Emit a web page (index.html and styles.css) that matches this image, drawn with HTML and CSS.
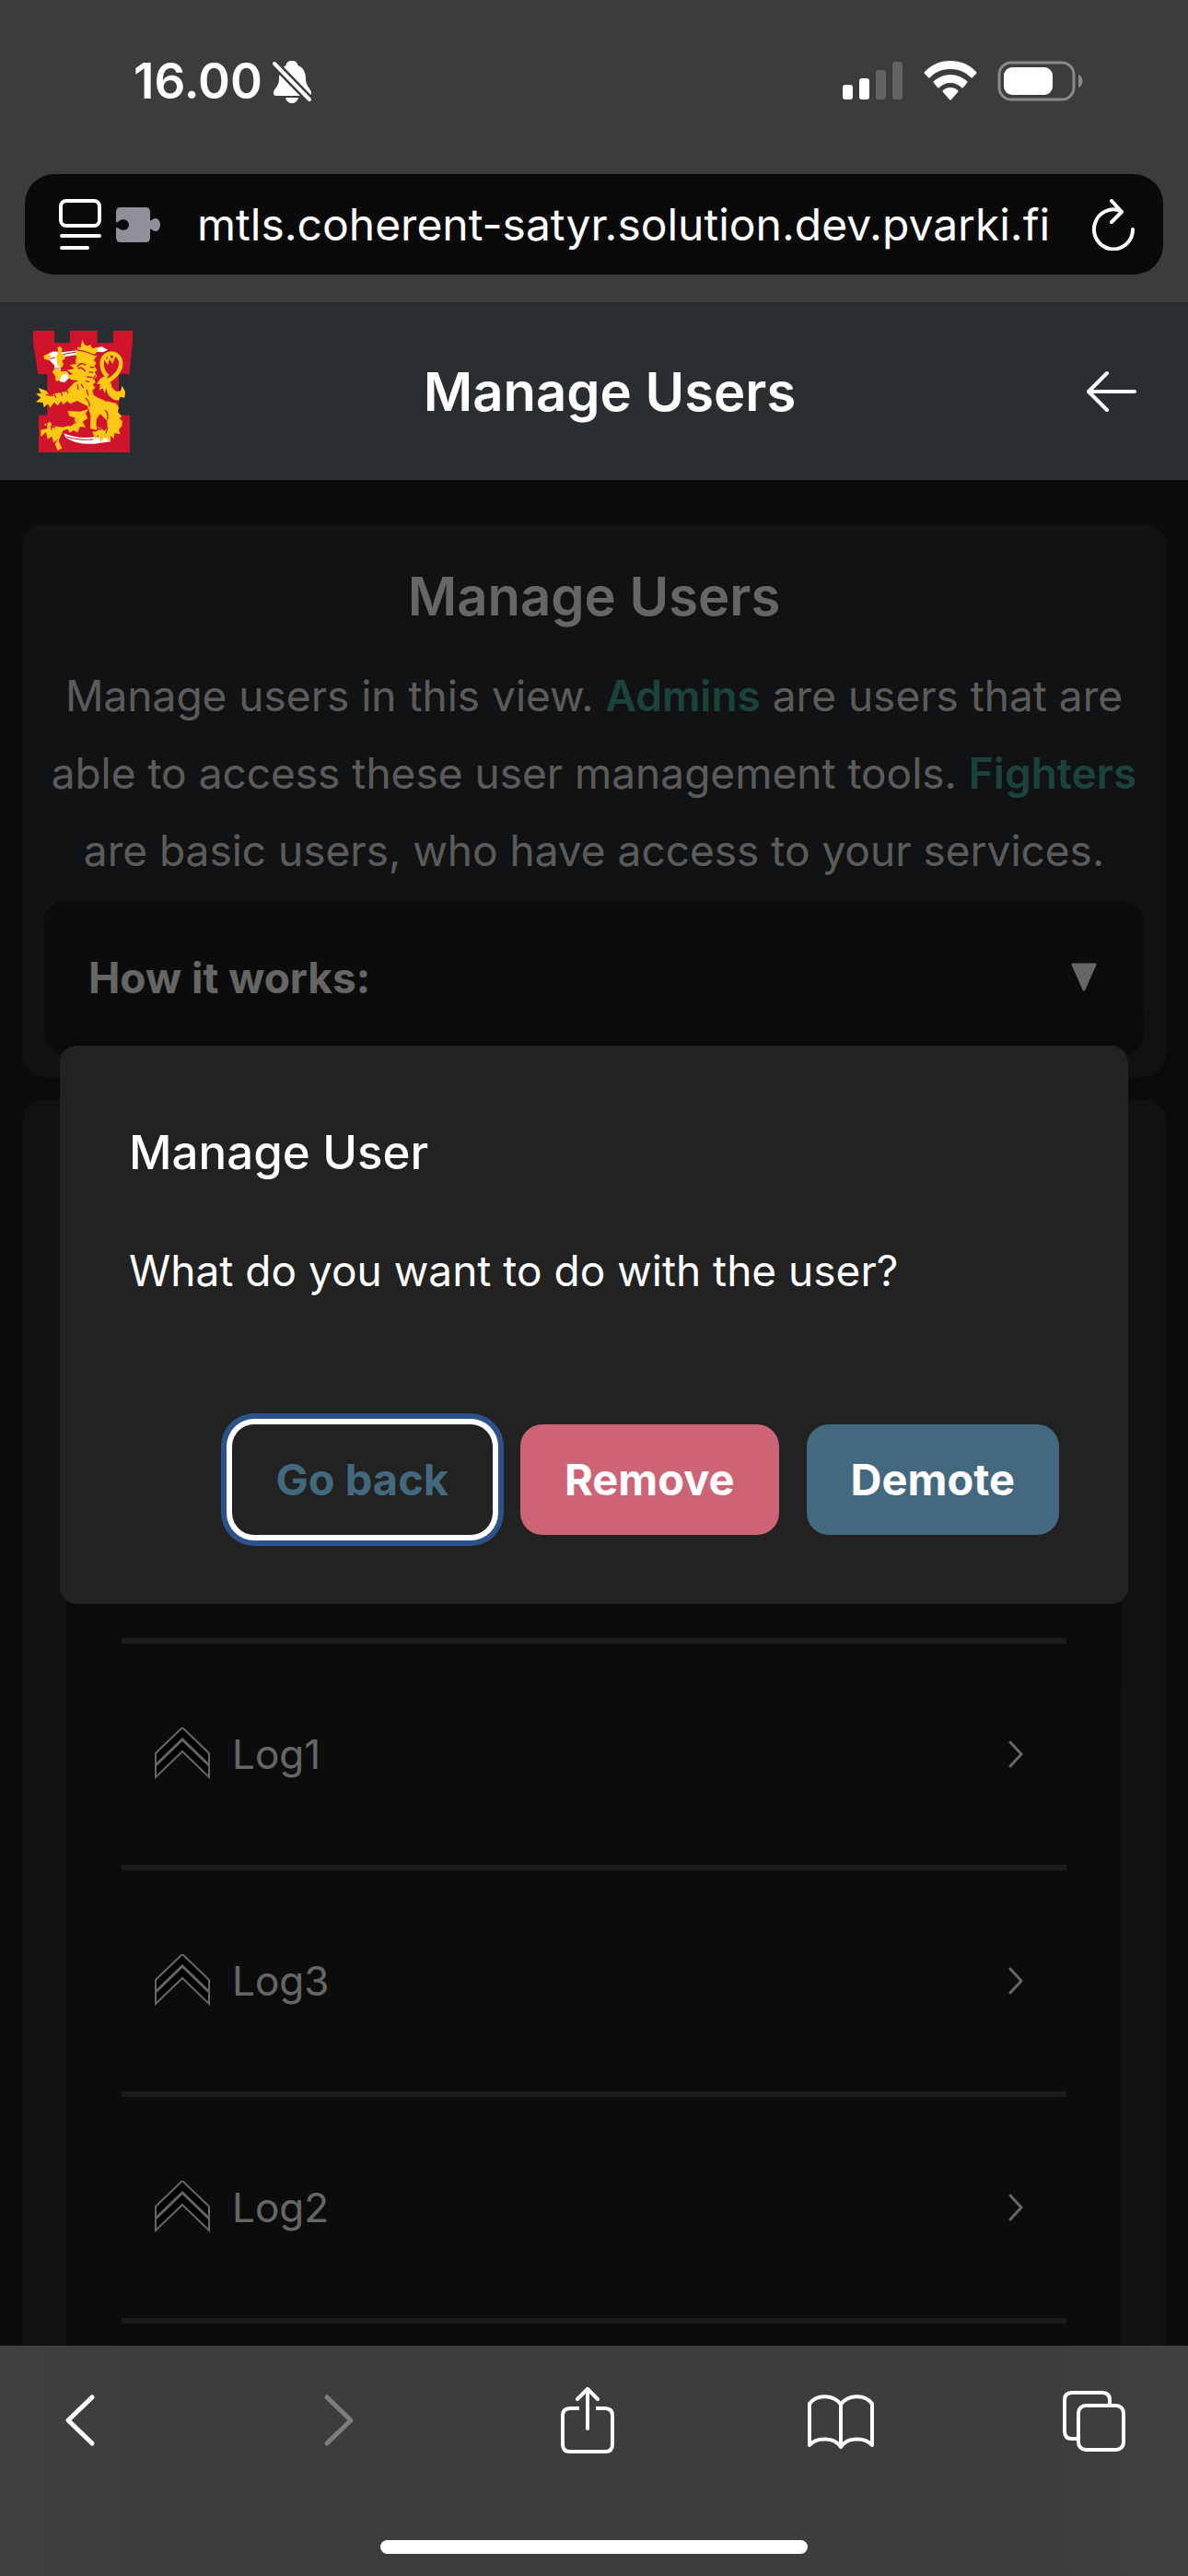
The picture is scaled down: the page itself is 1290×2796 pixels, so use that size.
FILE: index.html
```html
<!DOCTYPE html>
<html lang="en">
<head>
<meta charset="utf-8">
<meta name="viewport" content="width=device-width, initial-scale=1">
<title>Manage Users</title>
<link rel="stylesheet" href="styles.css">
</head>
<body>
<svg class="defs" width="0" height="0" aria-hidden="true">
  <symbol id="rank" viewBox="0 2 62 58">
    <path d="M2 56V30L31 2l29 28v26L31 28Z" fill="#000" stroke="#fff" stroke-width="2"/>
    <path d="M2 43 31 15l29 28" fill="none" stroke="#fff" stroke-width="3"/>
  </symbol>
  <symbol id="chevron" viewBox="0 0 16 30">
    <path d="M2 2 14 15 2 28" fill="none" stroke="#fff" stroke-width="3" stroke-linecap="round" stroke-linejoin="round"/>
  </symbol>
</svg>

<div class="top-bar">
  <div class="status">
    <div class="status-side">
      <time class="clock">16.00</time>
      <svg width="44" height="48" viewBox="0 0 44 48" aria-label="Silent">
        <path d="M22 2c-4 0-6 2-6.500 5C10 10 8 16 8 22c0 8-6 10-6 15 0 2 1 3 3 3h35c2 0 3-1 3-3 0-5-6-7-6-15 0-8-3-13-8.500-15C28 4 26 2 22 2Z" fill="#fff"/>
        <path d="M15 42h14c-1 4-4 6-7 6s-6-2-7-6Z" fill="#fff"/>
        <path d="M2 4 42 45" stroke="#3c3c3c" stroke-width="9"/>
        <path d="M3 5 41 44" stroke="#fff" stroke-width="4" stroke-linecap="round"/>
      </svg>
    </div>
    <div class="status-side">
      <svg width="66" height="44" viewBox="0 0 66 44" aria-label="Signal">
        <g fill="#fff"><rect y="26" width="11" height="16" rx="3"/><rect x="18" y="19" width="11" height="23" rx="3"/></g>
        <g fill="#636363"><rect x="36" y="10" width="11" height="32" rx="3"/><rect x="54" y="1" width="11" height="41" rx="3"/></g>
      </svg>
      <svg width="58" height="44" viewBox="0 0 58 44" aria-label="Wi-Fi">
        <g fill="#fff">
          <path d="M29 0C18 0 8 4 1 12q-1 1 0 2l4 4q1 1 2 0C13 12 20 9 29 9s16 3 22 9q1 1 2 0l4-4q1-1 0-2C50 4 40 0 29 0Z"/>
          <path d="M29 15c-7 0-13 3-18 7q-1 1 0 2l4 5q1 1 2 0c3-3 7-5 12-5s9 2 12 5q1 1 2 0l4-5q1-1 0-2c-5-4-11-7-18-7Z"/>
          <path d="M29 29c-3 0-6 1-8 3q-1 1 0 2l7 8q1 1 2 0l7-8q1-1 0-2c-2-2-5-3-8-3Z"/>
        </g>
      </svg>
      <svg width="94" height="44" viewBox="0 0 94 44" aria-label="Battery">
        <rect x="2" y="2" width="81" height="40" rx="13" fill="none" stroke="#8a8a8a" stroke-width="3"/>
        <rect x="7" y="7" width="53" height="30" rx="9" fill="#fff"/>
        <path d="M88 15c6 2 6 12 0 14Z" fill="#8a8a8a"/>
      </svg>
    </div>
  </div>
  <div class="address">
    <svg width="46" height="56" viewBox="0 0 46 56" aria-hidden="true">
      <g fill="none" stroke="#fff" stroke-width="4" stroke-linecap="round"><rect x="2" y="2" width="42" height="27" rx="6"/><path d="M3 40h41M3 53h28"/></g>
    </svg>
    <svg width="48" height="40" viewBox="0 0 48 40" aria-hidden="true">
      <path d="M5 1h27q5 0 5 5v9q1 1 3-1c4-3 8 1 8 6s-4 9-8 6q-2-2-3-1v9q0 5-5 5H5q-5 0-5-5V23q2 0 3 1c5 4 11 1 11-4s-6-8-11-4q-1 2-3 1V6q0-5 5-5Z" fill="#918f98"/>
    </svg>
    <input class="url" type="text" aria-label="Address" value="mtls.coherent-satyr.solution.dev.pvarki.fi" readonly>
    <button class="plain" aria-label="Reload">
      <svg width="48" height="56" viewBox="0 0 48 56"><path d="M33 13.500A21 21.500 0 1 0 45 33M22 2l11 12-11 11" fill="none" stroke="#fff" stroke-width="4" stroke-linecap="round" stroke-linejoin="round"/></svg>
    </button>
  </div>
</div>

<div class="web-view">
  <header class="app-header">
    <svg class="logo" viewBox="48 57 324 396" role="img" aria-label="Finnish lion emblem">
      <path fill="#cf142b" d="M48 57h69v40h51V57h89v40h52V57h63v38l-11 103h-34v134h36v121H66V332h28V198H64L48 95Z"/>
      <g fill="#fff">
        <path d="M132 128 250 113l22-4 19 10-15 8-24-2-115 19Z"/>
        <path d="M96 134q12-12 32-9l4 14 10 22-6 15 2 12-23 2 3-20-22-22Z"/>
        <path d="m134 206 12-18 14 4 8 16-18 18-16-4Z"/>
        <path d="M148 391q45 20 100 12l52 3v12l-52 7q-60 4-94-20Z"/>
      </g>
      <path d="M134 136 188 126M156 402q40 13 88 9M103 149l17-5m-8 36h21" fill="none" stroke="#cf142b" stroke-width="3"/>
      <g fill="#fdc916">
        <path d="m190 128 4-19 8 4 6-26 9 17 8 2 10-3 6 12 19-4-4 16-11 9Z"/>
        <path d="m82 139 15-8 10 10-10 12-13-4Zm45-27 9-4 7 10-4 11 14 9-2 12-9 3 5 15-9 11-10-8-4-28 6-16Z"/>
        <path d="m110 190 14-11 15 10 17-1 3 10-18 4-7 17-12 2-2-16Z"/>
        <path d="m187 121 69 18-11 13 9 10-7 10 9 13-8 8 9 12-10 8 4 12-9 7 8 10-9 9 4 15 17 11 21 8 35 8 9 14-4 15 14 13-8 8 10 9-3 18-9 7 4 17-18-4-2 18-11-9-3 21-14-18-15 17-9-24-8 17-10-26 12-5-2-12 13 3 17 11 9-12-1-21-22-22-13 17-1 35-19-5 1-43-6-21-10 15 7 16-17 11 10 19-18-3-8 19-14-7-13 8-5-12-15 5-15 33 11 25-14 6-9-20 10-15-15 10-5-20-14 9-5-23-17 15 0-22 23-5-12-14 20-7 7 13 34 4 29-7 11-12-5-13-14-4-5-17 40 2 26-7-1-10-35-18-22 10-10-9-13 12-7-12-11 15-12-11-12 18-8-13-13 12-3-16-23-2 16-14-16-13 17-1-9-18 26 10 11 16 22-9 30-5 28-29 14-7-24-2-15-14 20-5-19-13 24-4-15-13 20-2Z"/>
        <path d="m298 215 7 27 14 13 14-2 5-17 10 20-2 19-14-3-5 12-16-2-18-15-14-41Z"/>
        <path d="m283 204-17 10-11 17 11-1-2 22 10-8 7 17 6-22 14-18Z"/>
      </g>
      <path d="M288 223q45-26 46-60c-1-42-64-45-62 5q2 26 20 38" fill="none" stroke="#fdc916" stroke-width="13"/>
      <path d="m278 142 12 18 5-20 11 17 8-21" fill="none" stroke="#fdc916" stroke-width="7"/>
      <path d="M190 119q30 5 60 18M176 147q8 3 13-6m2 33q12-17 29-5m-26 11q12-7 24 9m14-14 14 2m-16 14 13 2m-20 14 17 2m-22 12 14 2m-40 9 3 17m9-19 8 13m10 5 6 20m-10 8q13 8 14 28m-76-56 6 13m-25-4 6 12m-25-4 4 10m-32-10 25 4m55 85 14-14m-18 28 22-14m-84 14 16 4m138-18 17 4m-20 15 15 6m12-64q12 10 8 31m-43 39 15-8m23 14 5-19m-183 8 3-19m-20 13 4-19m149-141 8-12m22 73 14 12" fill="none" stroke="#cf142b" stroke-width="4"/>
    </svg>
    <h1 class="heading">Manage Users</h1>
    <button class="plain" aria-label="Back">
      <svg width="62" height="48" viewBox="0 0 62 48"><path d="M52 24H3M22 4 2 24l20 20" fill="none" stroke="#fff" stroke-width="4" stroke-linecap="round" stroke-linejoin="round"/></svg>
    </button>
  </header>

  <main class="content">
    <section class="card intro">
      <h2 class="heading">Manage Users</h2>
      <p>Manage users in this view. <strong>Admins</strong> are users that are able to access these user management tools. <strong>Fighters</strong> are basic users, who have access to your services.</p>
      <button class="accordion" aria-expanded="false">How it works:
        <svg width="30" height="32" viewBox="0 0 30 32" aria-hidden="true"><path d="M3 2h24L15 29Z" fill="#fff" stroke="#fff" stroke-width="3" stroke-linejoin="round"/></svg>
      </button>
    </section>
    <section class="card users">
      <div class="user-panel">
        <ul class="user-list">
          <li><button class="user"><svg width="62" height="58"><use href="#rank"/></svg><span class="name">Log1</span><svg width="16" height="30"><use href="#chevron"/></svg></button></li>
          <li><button class="user"><svg width="62" height="58"><use href="#rank"/></svg><span class="name">Log3</span><svg width="16" height="30"><use href="#chevron"/></svg></button></li>
          <li><button class="user"><svg width="62" height="58"><use href="#rank"/></svg><span class="name">Log2</span><svg width="16" height="30"><use href="#chevron"/></svg></button></li>
        </ul>
      </div>
    </section>
  </main>

  <div class="backdrop">
    <div class="dialog" role="dialog" aria-modal="true" aria-labelledby="dialog-title">
      <h2 id="dialog-title">Manage User</h2>
      <p>What do you want to do with the user?</p>
      <div class="actions">
        <button class="btn btn-outline">Go back</button>
        <button class="btn btn-danger">Remove</button>
        <button class="btn btn-primary">Demote</button>
      </div>
    </div>
  </div>
</div>

<div class="toolbar">
  <nav class="tools" aria-label="Browser">
    <button class="plain" aria-label="Previous page"><svg width="36" height="72" viewBox="0 0 36 72"><path d="M31 11 5 36l26 25" fill="none" stroke="#fff" stroke-width="5" stroke-linecap="round" stroke-linejoin="round"/></svg></button>
    <button class="plain" aria-label="Next page" disabled><svg width="48" height="72" viewBox="0 0 48 72"><path d="m17 11 26 25-26 25" fill="none" stroke="#7e7e7e" stroke-width="5" stroke-linecap="round" stroke-linejoin="round"/></svg></button>
    <button class="plain" aria-label="Share"><svg width="58" height="72" viewBox="0 0 58 72"><path d="M20 23H10q-8 0-8 8v31q0 8 8 8h38q8 0 8-8V31q0-8-8-8H38" fill="none" stroke="#fff" stroke-width="4"/><path d="M29 45V3M18 13 29 2l11 11" fill="none" stroke="#fff" stroke-width="4" stroke-linecap="round" stroke-linejoin="round"/></svg></button>
    <button class="plain" aria-label="Bookmarks"><svg width="72" height="72" viewBox="0 0 72 72"><path d="M36 19C29 8 10 7 2 18v45c8-9 27-9 34 2 7-11 26-11 34-2V18C62 7 43 8 36 19v45" fill="none" stroke="#fff" stroke-width="4" stroke-linecap="round" stroke-linejoin="round"/></svg></button>
    <button class="plain" aria-label="Tabs"><svg width="68" height="72" viewBox="0 0 68 72"><g fill="none" stroke="#fff" stroke-width="4"><path d="M51 19v-5q0-8-8-8H10q-8 0-8 8v34q0 8 8 8h7"/><rect x="17" y="20" width="49" height="48" rx="8"/></g></svg></button>
  </nav>
  <div class="home-indicator"></div>
</div>
</body>
</html>
```
FILE: styles.css
```css
* { box-sizing: border-box; }

body {
  margin: 0;
  min-height: 100vh;
  display: flex;
  flex-direction: column;
  background: #1f1f1f;
  color: #fff;
  font-family: Inter, "Liberation Sans", sans-serif;
  font-size: 46px;
}

h1, h2, p, ul { margin: 0; padding: 0; }
svg { display: block; flex: none; }
button { font: inherit; color: inherit; border: 0; cursor: pointer; }
.defs { position: absolute; }
.plain { padding: 0; background: none; }

.top-bar {
  background: #3c3c3c;
  border-bottom: 1px solid #262829;
  padding: 60px 27px 30px;
}

.status {
  display: flex;
  justify-content: space-between;
  align-items: center;
  height: 56px;
  padding: 0 86px 0 118px;
}
.status-side { display: flex; align-items: center; gap: 22px; }
.status-side:first-child { gap: 10px; }
.clock { font-size: 53px; font-weight: 600; line-height: 56px; }

.address {
  display: flex;
  align-items: center;
  height: 109px;
  margin-top: 73px;
  padding: 0 30px 0 37px;
  border-radius: 32px;
  background: #0a0a0a;
}
.address svg + svg { margin-left: 16px; }
.url {
  flex: 1;
  min-width: 0;
  margin: 0 24px 0 40px;
  padding: 0;
  border: 0;
  outline: 0;
  background: none;
  color: #fff;
  font: 400 48px Inter, "Liberation Sans", sans-serif;
}

.web-view {
  position: relative;
  flex: 1;
  display: flex;
  flex-direction: column;
}

.app-header {
  position: relative;
  z-index: 2;
  display: flex;
  align-items: center;
  justify-content: space-between;
  height: 192px;
  padding: 0 48px 0 36px;
  background: #2a2e32;
}
.logo { width: 108px; height: 132px; }
.heading { font-size: 58px; font-weight: 600; line-height: 84px; }

.content {
  flex: 1;
  display: flex;
  flex-direction: column;
  gap: 24px;
  padding: 48px 24px 0;
}

.card { border-radius: 24px; background: #2a2e32; }

.intro {
  padding: 36px 24px 24px;
  text-align: center;
}
.intro p {
  margin: 24px 0 12px;
  line-height: 84px;
  color: #e4e4e4;
}
.intro strong { font-weight: 600; color: #46a891; }

.accordion {
  display: flex;
  align-items: center;
  justify-content: space-between;
  width: 100%;
  height: 168px;
  padding: 0 50px 0 48px;
  border-radius: 24px;
  background: #1f1f1f;
  font-weight: 700;
}

.users {
  flex: 1;
  display: flex;
  padding: 48px 48px 0;
  border-radius: 24px 24px 0 0;
}
.user-panel {
  flex: 1;
  padding: 537px 60px 24px;
  background: #1f1f1f;
}
.user-list { list-style: none; border-bottom: 6px solid #484848; }
.user-list li { border-top: 6px solid #484848; }
.user {
  display: flex;
  align-items: center;
  width: 100%;
  height: 240px;
  padding: 0 47px 0 35px;
  background: none;
  font-size: 44px;
}
.name { flex: 1; margin-left: 23px; text-align: left; }

.backdrop {
  position: absolute;
  inset: 0;
  z-index: 1;
  display: grid;
  align-items: center;
  padding: 0 65px;
  background: rgba(0, 0, 0, .6);
}
.dialog {
  padding: 72px 75px 75px;
  border-radius: 18px;
  background: #222;
  box-shadow: 0 24px 90px rgba(0, 0, 0, .1);
}
.dialog h2 { font-size: 51px; font-weight: 500; line-height: 88px; }
.dialog p { margin-top: 48px; line-height: 72px; }
.actions {
  display: flex;
  justify-content: flex-end;
  gap: 30px;
  margin-top: 131px;
}
.btn {
  height: 120px;
  padding: 0 48px;
  border-radius: 24px;
  font-size: 47px;
  font-weight: 700;
}
.btn-outline {
  background: #222;
  color: #43697f;
  box-shadow: 0 0 0 6px #fff, 0 0 0 12px #2d528b;
}
.btn-danger { background: #cc6475; }
.btn-primary { background: #43697f; }

.toolbar {
  height: 250px;
  padding: 45px 0 24px;
  display: flex;
  flex-direction: column;
  justify-content: space-between;
  background: linear-gradient(90deg, #3f4240, #3d3d3d 10%, #3d3d3d 90%, #404242);
}
.tools {
  display: flex;
  justify-content: space-between;
  padding: 0 66px 0 51px;
}
.tools button {
  display: flex;
  justify-content: center;
  width: 72px;
}
.home-indicator {
  width: 36%;
  height: 15px;
  margin: 0 auto;
  border-radius: 8px;
  background: #fff;
}

@media (max-width: 1100px) {
  .actions { flex-wrap: wrap; }
}
```
